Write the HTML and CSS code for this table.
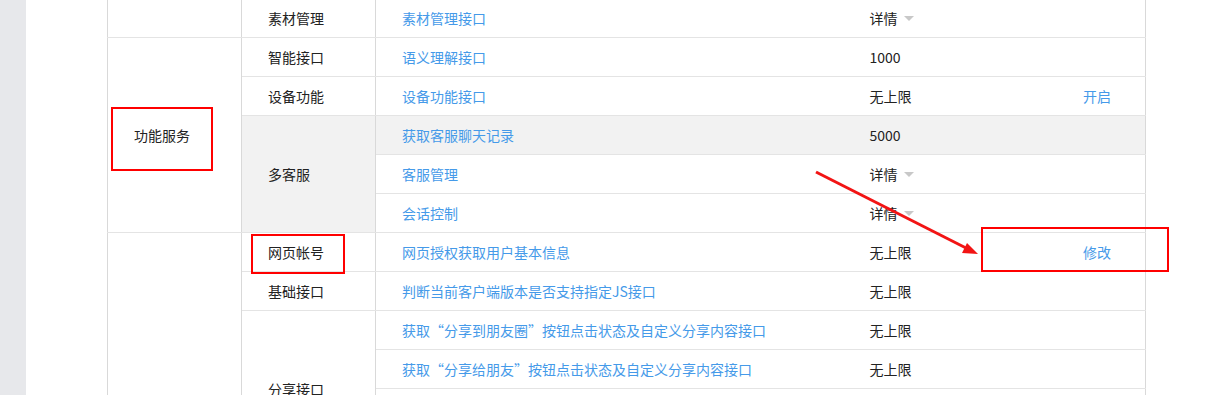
FILE: index.html
```html
<!DOCTYPE html>
<html>
<head>
  <meta charset="utf-8">
  <title>接口权限</title>
  <link rel="stylesheet" href="styles.css">
</head>
<body>
  <div class="side"></div>
  <div class="main">
    <table class="api-table">
      <colgroup>
        <col class="c-group">
        <col class="c-type">
        <col class="c-name">
        <col class="c-quota">
        <col class="c-op">
      </colgroup>
      <tbody>
        <tr>
          <td class="group top-cont"></td>
          <td>素材管理</td>
          <td><a href="#">素材管理接口</a></td>
          <td>详情<i class="caret"></i></td>
          <td class="op"></td>
        </tr>
        <tr>
          <td class="group" rowspan="5">功能服务</td>
          <td>智能接口</td>
          <td><a href="#">语义理解接口</a></td>
          <td>1000</td>
          <td class="op"></td>
        </tr>
        <tr>
          <td>设备功能</td>
          <td><a href="#">设备功能接口</a></td>
          <td>无上限</td>
          <td class="op"><a href="#">开启</a></td>
        </tr>
        <tr class="is-hover">
          <td class="hl" rowspan="3">多客服</td>
          <td><a href="#">获取客服聊天记录</a></td>
          <td>5000</td>
          <td class="op"></td>
        </tr>
        <tr>
          <td><a href="#">客服管理</a></td>
          <td>详情<i class="caret"></i></td>
          <td class="op"></td>
        </tr>
        <tr>
          <td><a href="#">会话控制</a></td>
          <td>详情<i class="caret"></i></td>
          <td class="op"></td>
        </tr>
        <tr>
          <td class="group" rowspan="10">网页服务</td>
          <td>网页帐号</td>
          <td><a href="#">网页授权获取用户基本信息</a></td>
          <td>无上限</td>
          <td class="op"><a href="#">修改</a></td>
        </tr>
        <tr>
          <td>基础接口</td>
          <td><a href="#">判断当前客户端版本是否支持指定JS接口</a></td>
          <td>无上限</td>
          <td class="op"></td>
        </tr>
        <tr>
          <td rowspan="4">分享接口</td>
          <td><a href="#">获取“分享到朋友圈”按钮点击状态及自定义分享内容接口</a></td>
          <td>无上限</td>
          <td class="op"></td>
        </tr>
        <tr>
          <td><a href="#">获取“分享给朋友”按钮点击状态及自定义分享内容接口</a></td>
          <td>无上限</td>
          <td class="op"></td>
        </tr>
        <tr>
          <td><a href="#">获取“分享到QQ”按钮点击状态及自定义分享内容接口</a></td>
          <td>无上限</td>
          <td class="op"></td>
        </tr>
        <tr>
          <td><a href="#">获取“分享到腾讯微博”按钮点击状态及自定义分享内容接口</a></td>
          <td>无上限</td>
          <td class="op"></td>
        </tr>
        <tr>
          <td rowspan="2">图像接口</td>
          <td><a href="#">拍照或从手机相册中选图接口</a></td>
          <td>无上限</td>
          <td class="op"></td>
        </tr>
        <tr>
          <td><a href="#">预览图片接口</a></td>
          <td>无上限</td>
          <td class="op"></td>
        </tr>
        <tr>
          <td rowspan="2">音频接口</td>
          <td><a href="#">开始录音接口</a></td>
          <td>无上限</td>
          <td class="op"></td>
        </tr>
        <tr>
          <td><a href="#">停止录音接口</a></td>
          <td>无上限</td>
          <td class="op"></td>
        </tr>
      </tbody>
    </table>
  </div>

  <!-- red markup drawn on top of the table -->
  <div class="mark mark-group"></div>
  <div class="mark mark-type"></div>
  <div class="mark mark-op"></div>
  <svg class="arrow" width="1220" height="395" viewBox="0 0 1220 395">
    <line x1="816" y1="172" x2="966" y2="248" stroke="#f21414" stroke-width="3"/>
    <polygon points="978,254 962,253 967,243" fill="#f21414"/>
  </svg>
</body>
</html>
```

FILE: styles.css
```css
/* Interface permission table */
html, body {
  height: 100%;
}

body {
  margin: 0;
  display: flex;
  overflow: hidden;
  font-family: "Noto Sans CJK SC", "Noto Sans", sans-serif;
  font-size: 14px;
  color: #222;
  background-color: #fff;
}

.side {
  width: 26px;
  flex-shrink: 0;
  background-color: #e7e8eb;
}

.main {
  flex: 1;
  padding-left: 81px;
}

.api-table {
  width: 1038px;
  margin-top: -1px;
  table-layout: fixed;
  border-collapse: collapse;
  border-left: 1px solid #d9d9d9;
  border-right: 1px solid #d9d9d9;
}

.c-group { width: 134px; }
.c-type { width: 134px; }
.c-name { width: 468px; }
.c-quota { width: 160px; }
.c-op { width: 142px; }

.api-table td {
  height: 38px;
  padding: 0 0 0 26px;
  border-bottom: 1px solid #e4e4e4;
  vertical-align: middle;
  white-space: nowrap;
  line-height: 20px;
}

.api-table td.group,
.api-table td[rowspan],
.api-table tr td:nth-last-child(4) {
  border-right: 1px solid #d9d9d9;
}

.api-table td.top-cont {
  border-bottom: 1px solid #e4e4e4;
}

.api-table td.op {
  padding: 0 34px 0 0;
  text-align: right;
}

.api-table a {
  color: #459ae9;
  text-decoration: none;
}

.is-hover td,
.api-table td.hl {
  background-color: #f2f2f2;
}

.caret {
  display: inline-block;
  width: 0;
  height: 0;
  margin-left: 6px;
  vertical-align: middle;
  border-left: 5px solid transparent;
  border-right: 5px solid transparent;
  border-top: 5px solid #c8c8c8;
  position: relative;
  top: -2px;
}

.mark {
  position: absolute;
  border: 2px solid #f00;
  box-sizing: border-box;
}

.mark-group {
  left: 111px;
  top: 107px;
  width: 102px;
  height: 64px;
}

.mark-type {
  left: 251px;
  top: 234px;
  width: 94px;
  height: 40px;
}

.mark-op {
  left: 981px;
  top: 227px;
  width: 188px;
  height: 45px;
}

.arrow {
  position: absolute;
  left: 0;
  top: 0;
  pointer-events: none;
}
```
